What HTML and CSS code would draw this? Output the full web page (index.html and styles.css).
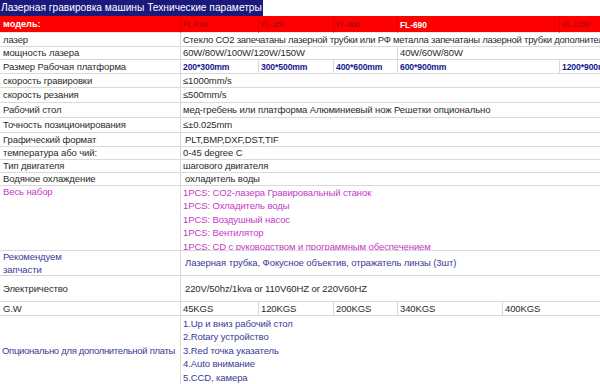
FILE: index.html
```html
<!DOCTYPE html>
<html lang="ru">
<head>
<meta charset="utf-8">
<title>Лазерная гравировка машины</title>
<link rel="stylesheet" href="styles.css">
</head>
<body>
<div class="title"><span class="title-text">Лазерная гравировка машины Технические параметры</span></div>
<div class="spec">
  <div class="c h h1 b-white">модель:</div>
  <div class="c h small">FL-K40</div>
  <div class="c h small">FL-350</div>
  <div class="c h small">FL-460</div>
  <div class="c h s2 b-white b-model">FL-690</div>
  <div class="c h small">FL-1290</div>

  <div class="c k">лазер</div>
  <div class="c s6 tight">Стекло CO2 запечатаны лазерной трубки или РФ металла запечатаны лазерной трубки дополнительно</div>

  <div class="c k">мощность лазера</div>
  <div class="c s3">60W/80W/100W/120W/150W</div>
  <div class="c s3">40W/60W/80W</div>

  <div class="c k">Размер Рабочая платформа</div>
  <div class="c navy">200*300mm</div>
  <div class="c navy">300*500mm</div>
  <div class="c navy">400*600mm</div>
  <div class="c s2 navy">600*900mm</div>
  <div class="c navy">1200*900mm</div>

  <div class="c k">скорость гравировки</div>
  <div class="c s6">≤1000mm/s</div>

  <div class="c k">скорость резания</div>
  <div class="c s6">≤500mm/s</div>

  <div class="c k">Рабочий стол</div>
  <div class="c s6">мед-гребень или платформа Алюминиевый нож Решетки опционально</div>

  <div class="c k">Точность позиционирования</div>
  <div class="c s6">≤±0.025mm</div>

  <div class="c k">Графический формат</div>
  <div class="c s6 ind">PLT,BMP,DXF,DST,TIF</div>

  <div class="c k">температура або чий:</div>
  <div class="c s6">0-45 degree C</div>

  <div class="c k">Тип двигателя</div>
  <div class="c s6">шагового двигателя</div>

  <div class="c k">Водяное охлаждение</div>
  <div class="c s6 ind">охладитель воды</div>

  <div class="c k top pink">Весь набор</div>
  <div class="c s6 list pink">
    <span>1PCS: CO2-лазера Гравировальный станок</span>
    <span>1PCS: Охладитель воды</span>
    <span>1PCS: Воздушный насос</span>
    <span>1PCS: Вентилятор</span>
    <span>1PCS: CD с руководством и программным обеспечением</span>
  </div>

  <div class="c k list blue">
    <span>Рекомендуем</span>
    <span>запчасти</span>
  </div>
  <div class="c s6 blue ind">Лазерная трубка, Фокусное объектив, отражатель линзы (3шт)</div>

  <div class="c k">Электричество</div>
  <div class="c s6 ind">220V/50hz/1kva or 110V60HZ or 220V60HZ</div>

  <div class="c k">G.W</div>
  <div class="c">45KGS</div>
  <div class="c">120KGS</div>
  <div class="c">200KGS</div>
  <div class="c">340KGS</div>
  <div class="c s2">400KGS</div>

  <div class="c k blue opt">Опционально для дополнительной платы</div>
  <div class="c s6 list blue">
    <span>1.Up и вниз рабочий стол</span>
    <span>2.Rotary устройство</span>
    <span>3.Red точка указатель</span>
    <span>4.Auto внимание</span>
    <span>5.CCD, камера</span>
  </div>
</div>
</body>
</html>
```
FILE: styles.css
```css
html, body {
  margin: 0;
  padding: 0;
  overflow: hidden;
  background: #ffffff;
}
body {
  width: 600px;
  height: 384px;
  font-family: "Liberation Sans", Arial, sans-serif;
  font-size: 9.5px;
  letter-spacing: -0.1px;
  color: #2b2b2b;
}
.title {
  height: 16px;
  display: flex;
}
.title-text {
  background: #1a1a7c;
  color: #ffffff;
  font-size: 10.2px;
  letter-spacing: 0;
  line-height: 16px;
  padding: 0 1px;
  white-space: nowrap;
}
.spec {
  display: grid;
  width: 640px;
  grid-template-columns: 181px 78px 75px 64px 105px 57px 80px;
  grid-template-rows: 17px 14px 13px 14px 14px 15px 15px 15px 14px 13px 13px 13px 65px 25px 26px 14px 70px;
}
.c {
  box-sizing: border-box;
  border-right: 1px solid #d9d9d9;
  border-bottom: 1px solid #d9d9d9;
  padding: 0 2px;
  display: flex;
  align-items: center;
  white-space: nowrap;
  overflow: hidden;
  line-height: 12px;
}
.k { padding-left: 3px; }
.s2 { grid-column: span 2; }
.s3 { grid-column: span 3; }
.s6 { grid-column: span 6; }
.ind { padding-left: 4px; }
.tight { letter-spacing: -0.25px; }
.opt { letter-spacing: -0.3px; padding-left: 2px; padding-right: 0; }
.h {
  background: #ff0000;
  border-right: 1px solid #e40000;
  border-bottom: 1px solid #e8e8e8;
  align-items: flex-start;
  padding-top: 2px;
}
.h1 { padding-left: 3px; }
.b-white {
  color: #ffffff;
  font-weight: bold;
  font-size: 9.2px;
  letter-spacing: 0;
}
.b-model { font-size: 8.3px; padding-top: 3px; }
.small {
  color: #8a1010;
  font-size: 7.5px;
  letter-spacing: 0;
  padding-top: 3px;
}
.navy {
  color: #16168e;
  font-weight: bold;
  font-size: 8.6px;
  letter-spacing: -0.1px;
}
.top { align-items: flex-start; padding-top: 0; }
.pink { color: #c638c6; }
.blue { color: #3a3a98; }
.list {
  flex-direction: column;
  align-items: flex-start;
  justify-content: center;
}
.list span { display: block; line-height: 13.4px; }
.c.pink.list { justify-content: flex-start; }
```
